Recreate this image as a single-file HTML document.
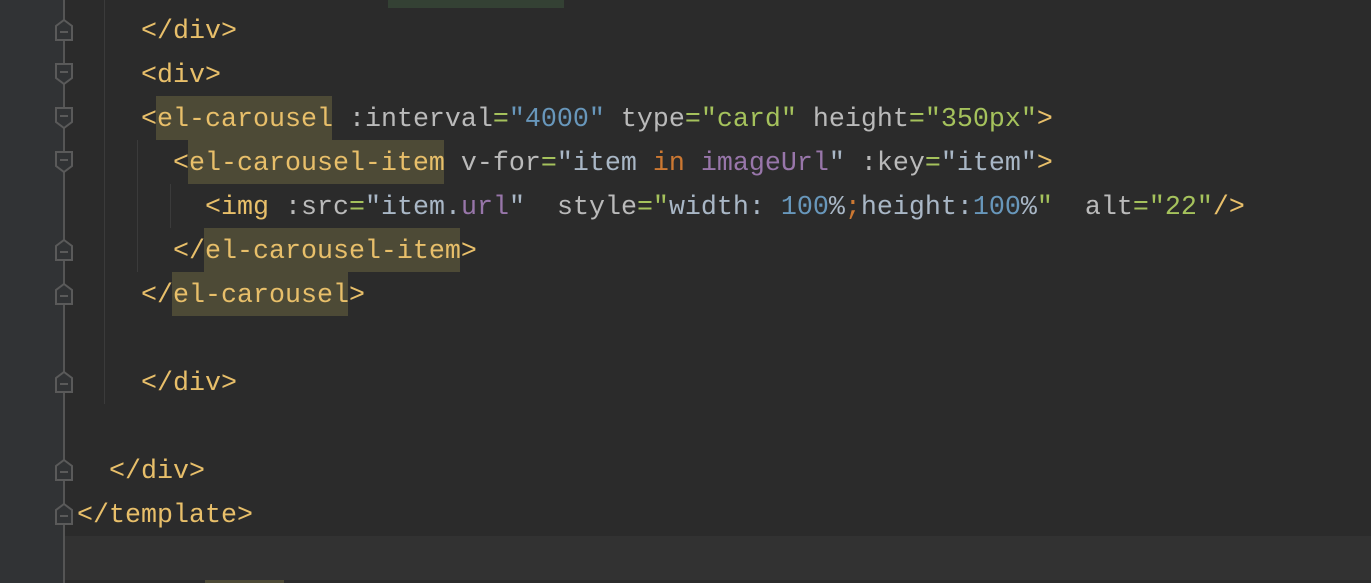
<!DOCTYPE html>
<html style="overflow:hidden;height:583px"><head><meta charset="utf-8"><style>
body{margin:0;width:1371px;height:583px;overflow:hidden;background:#2b2b2b;position:relative;font-family:"Liberation Mono",monospace;}
.g{position:absolute;left:0;top:0;width:64px;height:583px;background:#313335;}
.cur{position:absolute;left:65px;top:536px;width:1306px;height:44px;background:#323232;}
.fl{position:absolute;left:63px;top:0;width:2px;height:583px;background:#555;}
.ig{position:absolute;width:1px;background:#3b3b3b;}
.hl{position:absolute;background:#4d4a36;height:44px;}
.ln{position:absolute;left:77px;height:44px;line-height:48px;font-size:26.67px;white-space:pre;color:#a9b7c6;}
.t{color:#e8bf6a}.a{color:#bababa}.s{color:#a5c25c}.n{color:#6897bb}.k{color:#cc7832}.p{color:#9876aa}.w{color:#a9b7c6}
svg.f{position:absolute;left:55px;}
</style></head><body>
<div class="g"></div>
<div class="cur"></div>
<div class="fl"></div>
<div class="ig" style="left:104px;top:0;height:404px"></div>
<div class="ig" style="left:137px;top:140px;height:132px"></div>
<div class="ig" style="left:170px;top:184px;height:44px"></div>
<div class="hl" style="left:388px;top:0;width:176px;height:8px;background:#344134"></div>
<div class="hl" style="left:156px;top:96px;width:176px"></div>
<div class="hl" style="left:188px;top:140px;width:256px"></div>
<div class="hl" style="left:204px;top:228px;width:256px"></div>
<div class="hl" style="left:172px;top:272px;width:176px"></div>
<div class="hl" style="left:205px;top:580px;width:79px;height:3px"></div>

<svg class="f" style="top:19px" width="18" height="22"><path d="M1 21V7L9 1L17 7V21Z" fill="#313335" stroke="#5a5a5a" stroke-width="2"/><path d="M5 13H13" stroke="#5a5a5a" stroke-width="2"/></svg>
<svg class="f" style="top:63px" width="18" height="22"><path d="M1 1V15L9 21L17 15V1Z" fill="#313335" stroke="#5a5a5a" stroke-width="2"/><path d="M5 9H13" stroke="#5a5a5a" stroke-width="2"/></svg>
<svg class="f" style="top:107px" width="18" height="22"><path d="M1 1V15L9 21L17 15V1Z" fill="#313335" stroke="#5a5a5a" stroke-width="2"/><path d="M5 9H13" stroke="#5a5a5a" stroke-width="2"/></svg>
<svg class="f" style="top:151px" width="18" height="22"><path d="M1 1V15L9 21L17 15V1Z" fill="#313335" stroke="#5a5a5a" stroke-width="2"/><path d="M5 9H13" stroke="#5a5a5a" stroke-width="2"/></svg>
<svg class="f" style="top:239px" width="18" height="22"><path d="M1 21V7L9 1L17 7V21Z" fill="#313335" stroke="#5a5a5a" stroke-width="2"/><path d="M5 13H13" stroke="#5a5a5a" stroke-width="2"/></svg>
<svg class="f" style="top:283px" width="18" height="22"><path d="M1 21V7L9 1L17 7V21Z" fill="#313335" stroke="#5a5a5a" stroke-width="2"/><path d="M5 13H13" stroke="#5a5a5a" stroke-width="2"/></svg>
<svg class="f" style="top:371px" width="18" height="22"><path d="M1 21V7L9 1L17 7V21Z" fill="#313335" stroke="#5a5a5a" stroke-width="2"/><path d="M5 13H13" stroke="#5a5a5a" stroke-width="2"/></svg>
<svg class="f" style="top:459px" width="18" height="22"><path d="M1 21V7L9 1L17 7V21Z" fill="#313335" stroke="#5a5a5a" stroke-width="2"/><path d="M5 13H13" stroke="#5a5a5a" stroke-width="2"/></svg>
<svg class="f" style="top:503px" width="18" height="22"><path d="M1 21V7L9 1L17 7V21Z" fill="#313335" stroke="#5a5a5a" stroke-width="2"/><path d="M5 13H13" stroke="#5a5a5a" stroke-width="2"/></svg>

<div class="ln" style="top:8px"><span class="t">    &lt;/div&gt;</span></div>
<div class="ln" style="top:52px"><span class="t">    &lt;div&gt;</span></div>
<div class="ln" style="top:96px"><span class="t">    &lt;el-carousel</span> <span class="a">:interval</span><span class="s">=</span><span class="n">"4000"</span> <span class="a">type</span><span class="s">="card"</span> <span class="a">height</span><span class="s">="350px"</span><span class="t">&gt;</span></div>
<div class="ln" style="top:140px"><span class="t">      &lt;el-carousel-item</span> <span class="a">v-for</span><span class="s">=</span><span class="w">"item </span><span class="k">in</span> <span class="p">imageUrl</span><span class="w">"</span> <span class="a">:key</span><span class="s">=</span><span class="w">"item"</span><span class="t">&gt;</span></div>
<div class="ln" style="top:184px"><span class="t">        &lt;img</span> <span class="a">:src</span><span class="s">=</span><span class="w">"item.</span><span class="p">url</span><span class="w">"</span>  <span class="a">style</span><span class="s">="</span><span class="w">width: </span><span class="n">100</span><span class="w">%</span><span class="k">;</span><span class="w">height:</span><span class="n">100</span><span class="w">%</span><span class="s">"</span>  <span class="a">alt</span><span class="s">="22"</span><span class="t">/&gt;</span></div>
<div class="ln" style="top:228px"><span class="t">      &lt;/el-carousel-item&gt;</span></div>
<div class="ln" style="top:272px"><span class="t">    &lt;/el-carousel&gt;</span></div>
<div class="ln" style="top:360px"><span class="t">    &lt;/div&gt;</span></div>
<div class="ln" style="top:448px"><span class="t">  &lt;/div&gt;</span></div>
<div class="ln" style="top:492px"><span class="t">&lt;/template&gt;</span></div>
</body></html>
